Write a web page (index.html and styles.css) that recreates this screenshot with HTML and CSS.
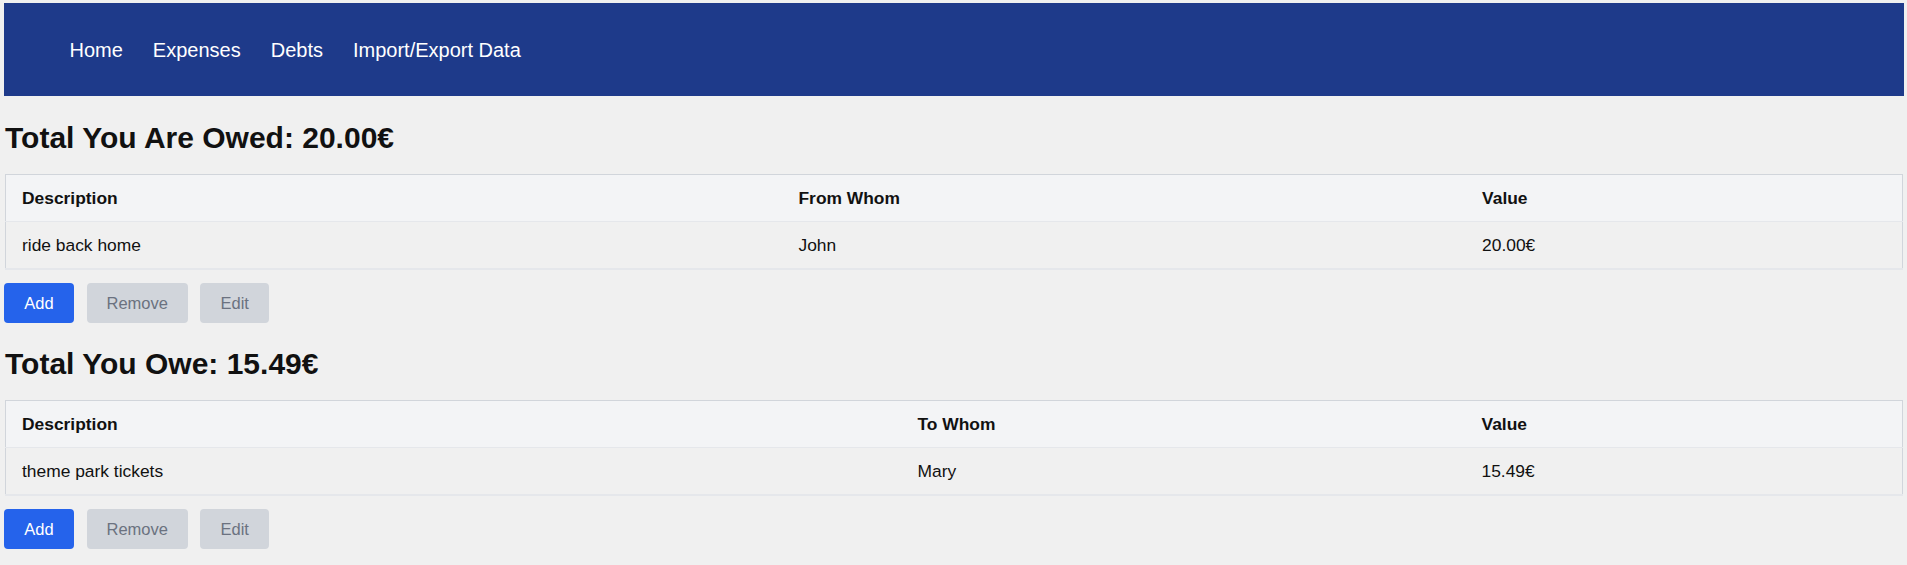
FILE: index.html
```html
<!DOCTYPE html>
<html lang="en">
<head>
<meta charset="utf-8">
<title>Debts</title>
<link rel="stylesheet" href="styles.css">
</head>
<body>
<nav class="topnav">
  <a class="nav-link" href="#">Home</a>
  <a class="nav-link" href="#">Expenses</a>
  <a class="nav-link" href="#">Debts</a>
  <a class="nav-link" href="#">Import/Export Data</a>
</nav>
<main class="content">
  <section class="debt-section">
    <h2 class="section-title">Total You Are Owed: 20.00€</h2>
    <table class="debt-table">
      <colgroup>
        <col class="owed-c1"><col class="owed-c2"><col class="owed-c3">
      </colgroup>
      <thead>
        <tr><th>Description</th><th>From Whom</th><th>Value</th></tr>
      </thead>
      <tbody>
        <tr><td>ride back home</td><td>John</td><td>20.00€</td></tr>
      </tbody>
    </table>
    <div class="actions">
      <button class="btn btn-primary">Add</button>
      <button class="btn btn-disabled">Remove</button>
      <button class="btn btn-disabled">Edit</button>
    </div>
  </section>
  <section class="debt-section">
    <h2 class="section-title">Total You Owe: 15.49€</h2>
    <table class="debt-table">
      <colgroup>
        <col class="owe-c1"><col class="owe-c2"><col class="owe-c3">
      </colgroup>
      <thead>
        <tr><th>Description</th><th>To Whom</th><th>Value</th></tr>
      </thead>
      <tbody>
        <tr><td>theme park tickets</td><td>Mary</td><td>15.49€</td></tr>
      </tbody>
    </table>
    <div class="actions">
      <button class="btn btn-primary">Add</button>
      <button class="btn btn-disabled">Remove</button>
      <button class="btn btn-disabled">Edit</button>
    </div>
  </section>
</main>
</body>
</html>
```

FILE: styles.css
```css
* { box-sizing: border-box; }

html, body {
  margin: 0;
  background: #f0f0f0;
}

body {
  padding: 3px 3px 0 4px;
  font-family: "Liberation Sans", Arial, sans-serif;
  color: #111111;
}

.topnav {
  display: flex;
  align-items: center;
  gap: 30px;
  height: 93px;
  padding-left: 65.5px;
  background: #1e3a8a;
}

.nav-link {
  color: #ffffff;
  text-decoration: none;
  font-size: 20px;
  line-height: 24px;
}

.content {
  display: flex;
  flex-direction: column;
}

.section-title {
  margin: 23.5px 0 18px 1px;
  font-size: 30px;
  line-height: 36px;
  font-weight: 700;
  color: #111111;
}

.debt-table {
  width: calc(100% - 2px);
  margin-left: 1px;
  table-layout: fixed;
  border-collapse: collapse;
  border-top: 1px solid #d1d5db;
  border-left: 1px solid #d1d5db;
  border-right: 1px solid #d1d5db;
  border-bottom: 2px solid #e5e7eb;
  font-size: 17.4px;
}

.owed-c1 { width: 777px; }
.owed-c2 { width: 683.6px; }
.owe-c1 { width: 896px; }
.owe-c2 { width: 564px; }

.debt-table th,
.debt-table td {
  text-align: left;
  padding: 12px 16px;
  line-height: 22px;
  vertical-align: middle;
}

.debt-table thead tr {
  background: #f3f4f6;
  border-bottom: 1px solid #e5e7eb;
}

.debt-table th {
  font-weight: 700;
}

.debt-table tbody tr {
  background: #f0f0f0;
}

.actions {
  display: flex;
  gap: 12.5px;
  margin-top: 13px;
}

.btn {
  height: 40px;
  padding: 0 20px;
  border: none;
  border-radius: 4px;
  font-family: "Liberation Sans", Arial, sans-serif;
  font-size: 16.5px;
  line-height: 24px;
  cursor: pointer;
}

.btn-primary {
  background: #2563eb;
  color: #ffffff;
  width: 70px;
  padding: 0;
}

.btn-disabled {
  background: #d1d5db;
  color: #6b7280;
  cursor: not-allowed;
}
```
